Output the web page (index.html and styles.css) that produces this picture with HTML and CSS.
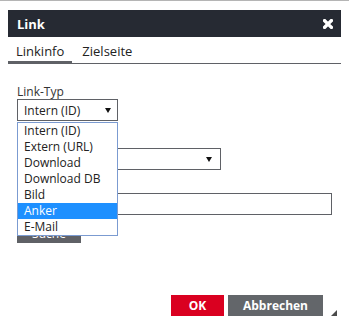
FILE: index.html
```html
<!DOCTYPE html>
<html lang="de">
<head>
    <meta charset="UTF-8">
    <title>Link</title>
    <link rel="stylesheet" href="styles.css">
</head>
<body>
    <div class="page-edge"></div>
    <div class="dialog">
        <div class="dialog-head">
            <span class="dialog-title">Link</span>
            <svg class="close-icon" width="10" height="10" viewBox="0 0 10 10">
                <path d="M1.6 1.6 L8.4 8.4 M8.4 1.6 L1.6 8.4" stroke="#fff" stroke-width="3.4" stroke-linecap="square"/>
            </svg>
        </div>
        <div class="tabs">
            <div class="tab active">Linkinfo</div>
            <div class="tab">Zielseite</div>
        </div>
        <div class="dialog-body">
            <div class="field">
                <div class="field-label">Link-Typ</div>
                <div class="select-wrap">
                    <div class="fake-select small">
                        <span>Intern (ID)</span>
                        <span class="arrow"></span>
                    </div>
                    <!-- geöffnete Liste -->
                    <ul class="select-list">
                        <li>Intern (ID)</li>
                        <li>Extern (URL)</li>
                        <li>Download</li>
                        <li>Download DB</li>
                        <li>Bild</li>
                        <li class="selected">Anker</li>
                        <li>E-Mail</li>
                    </ul>
                </div>
            </div>
            <div class="field field-second">
                <!-- Label liegt unter der offenen Liste -->
                <div class="field-label label-hidden"></div>
                <div class="fake-select medium">
                    <span></span>
                    <span class="arrow"></span>
                </div>
            </div>
            <div class="field field-third">
                <div class="field-label label-hidden"></div>
                <input type="text" class="text-input">
                <button class="search-button">Suche</button>
            </div>
        </div>
        <div class="dialog-foot">
            <button class="btn btn-ok">OK</button>
            <button class="btn btn-cancel">Abbrechen</button>
            <span class="resize-grip"></span>
        </div>
    </div>
</body>
</html>
```

FILE: styles.css
```css
/* Dialog "Link" */
body {
    margin: 0;
    padding: 0;
    font-family: 'Open Sans', 'Liberation Sans', sans-serif;
    background-color: #fff;
    color: #333;
}

.page-edge {
    height: 1px;
    background-color: #b5b5b5;
}

.dialog {
    width: 333px;
    margin: 9px 8px 0;
}

.dialog-head {
    height: 27px;
    background-color: #262a33;
    display: flex;
    align-items: center;
    justify-content: space-between;
    padding: 0 8px 0 9px;
}

.dialog-title {
    color: white;
    font-weight: bold;
    font-size: 13px;
}

.close-icon {
    display: block;
}

/* Reiter */
.tabs {
    display: flex;
    height: 26px;
    border-bottom: 1px solid #5f6166;
}

.tab {
    font-size: 13px;
    color: #222;
    padding: 5px 8px 0;
    margin-right: 2px;
}

.tab.active {
    border-bottom: 3px solid #5f6166;
    margin-bottom: -1px;
}

.dialog-body {
    padding: 20px 9px 0;
}

.field-label {
    font-size: 12px;
    line-height: 15px;
    color: #333;
}

.label-hidden {
    height: 15px;
}

.field-second {
    margin-top: 12px;
}

.field-third {
    margin-top: 8px;
}

.select-wrap {
    position: relative;
}

.fake-select {
    box-sizing: border-box;
    height: 22px;
    border: 1px solid #5f6166;
    display: flex;
    align-items: center;
    justify-content: space-between;
    padding: 0 6px 0 6px;
    font-size: 12px;
    color: #222;
}

.fake-select.small {
    width: 101px;
}

.fake-select.medium {
    width: 204px;
    padding-right: 8px;
}

.arrow {
    width: 0;
    height: 0;
    border-left: 3px solid transparent;
    border-right: 3px solid transparent;
    border-top: 5px solid #111;
}

/* offene Auswahlliste */
.select-list {
    position: absolute;
    top: 23px;
    left: 0;
    z-index: 2;
    box-sizing: border-box;
    width: 101px;
    margin: 0;
    padding: 0;
    list-style: none;
    background-color: white;
    border: 1px solid #7b9bd1;
}

.select-list li {
    height: 16px;
    line-height: 16px;
    padding-left: 6px;
    font-size: 12px;
    color: #222;
}

.select-list li.selected {
    background-color: #1e90ff;
    color: white;
}

.text-input {
    display: block;
    box-sizing: border-box;
    width: 100%;
    height: 22px;
    border: 1px solid #5f6166;
    margin: 0;
}

.search-button {
    display: block;
    margin-top: 8px;
    width: 64px;
    height: 20px;
    border: none;
    background-color: #5f6166;
    color: white;
    font-family: inherit;
    font-size: 12px;
    padding: 0;
}

/* Fußzeile */
.dialog-foot {
    display: flex;
    justify-content: flex-end;
    align-items: flex-end;
    margin-top: 52px;
    padding-right: 4px;
}

.btn {
    height: 21px;
    border: none;
    padding: 0;
    color: white;
    font-family: inherit;
    font-weight: bold;
    font-size: 12px;
}

.btn-ok {
    width: 53px;
    background-color: #da0020;
    margin-right: 4px;
}

.btn-cancel {
    width: 95px;
    background-color: #63666a;
}

.resize-grip {
    width: 9px;
    height: 9px;
    margin-left: 5px;
    margin-bottom: -3px;
    background-color: #4a4a4a;
    clip-path: polygon(100% 0, 100% 100%, 0 100%);
}
```
